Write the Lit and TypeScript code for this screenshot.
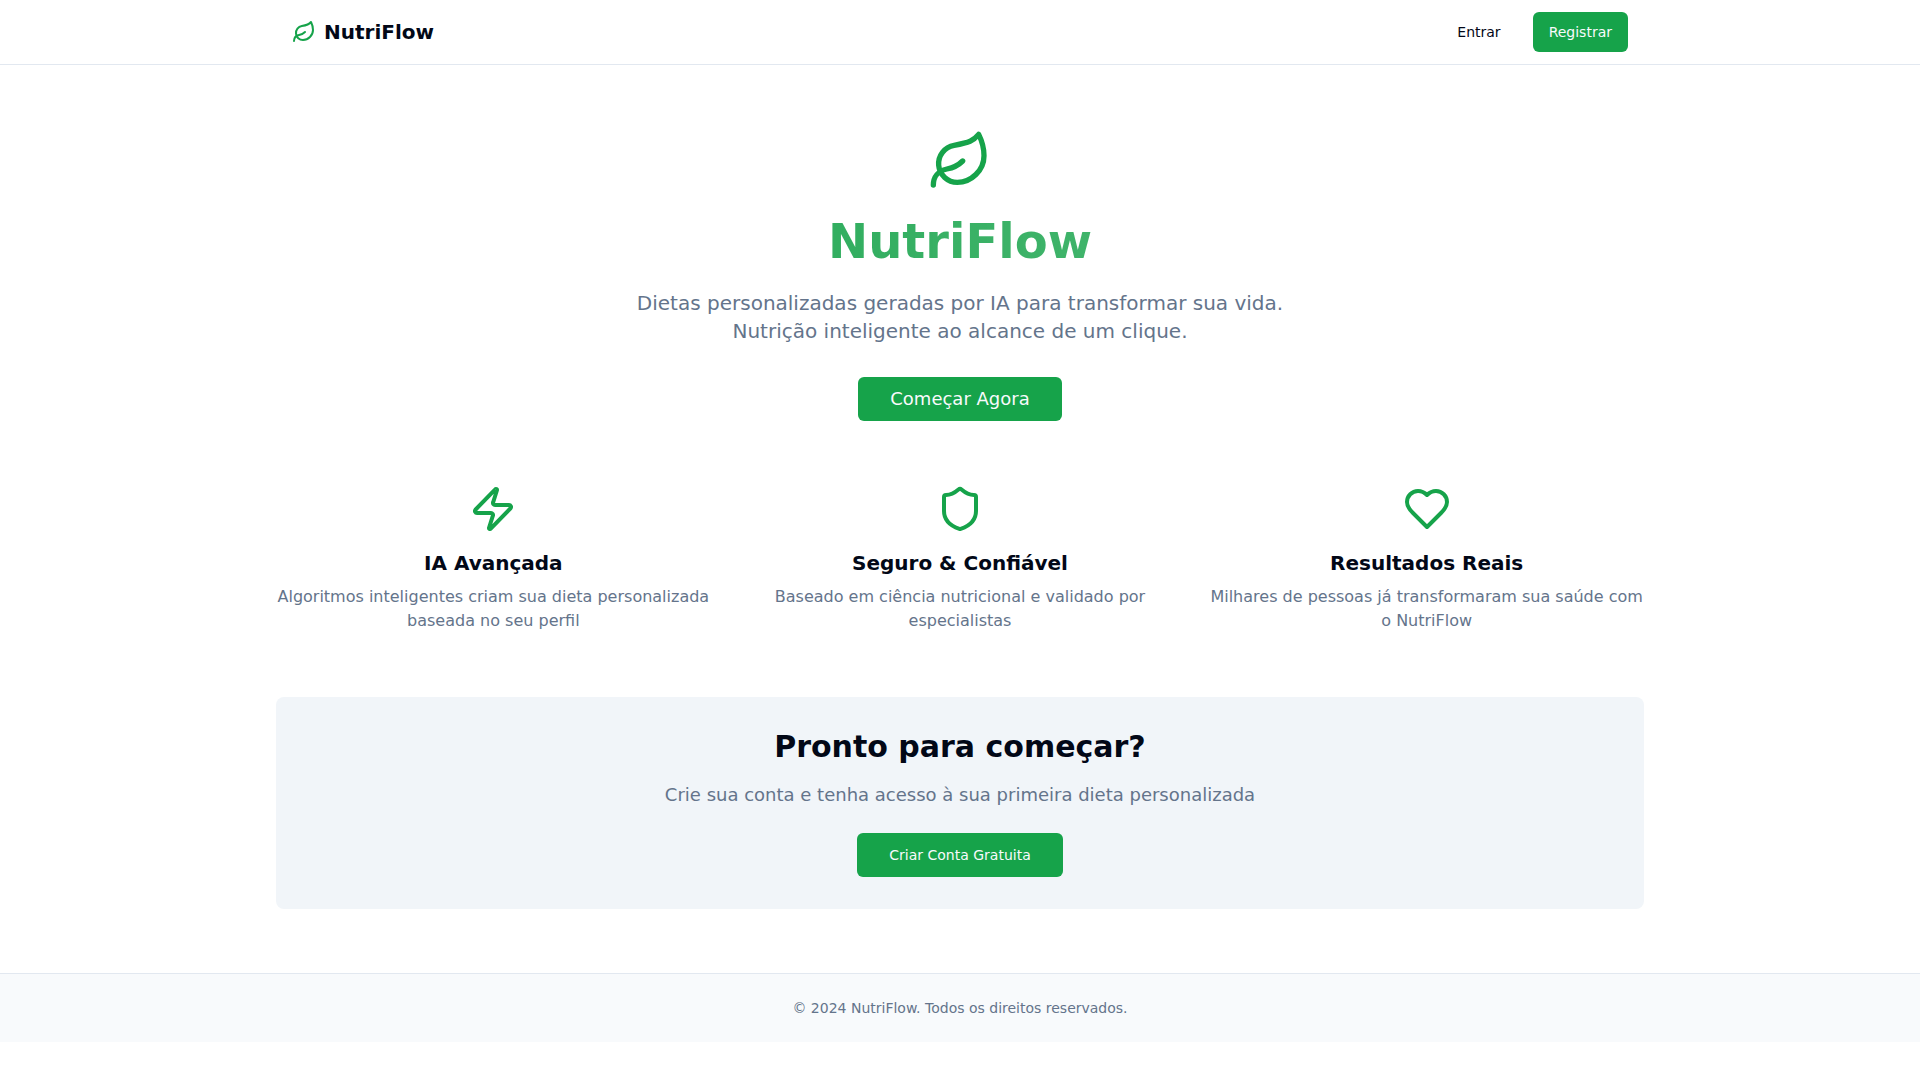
import { LitElement, html, css, svg } from "lit";
import { customElement, property } from "lit/decorators.js";

const iconPaths = {
  leaf: svg`<path d="M11 20A7 7 0 0 1 9.8 6.1C15.5 5 17 4.48 19 2c1 2 2 4.18 2 8 0 5.5-4.78 10-10 10Z"/><path d="M2 21c0-3 1.85-5.36 5.08-6C9.5 14.52 12 13 13 12"/>`,
  zap: svg`<path d="M4 14a1 1 0 0 1-.78-1.63l9.9-10.2a.5.5 0 0 1 .86.46l-1.92 6.02A1 1 0 0 0 13 10h7a1 1 0 0 1 .78 1.63l-9.9 10.2a.5.5 0 0 1-.86-.46l1.92-6.02A1 1 0 0 0 11 14z"/>`,
  shield: svg`<path d="M20 13c0 5-3.5 7.5-7.66 8.95a1 1 0 0 1-.67-.01C7.5 20.5 4 18 4 13V6a1 1 0 0 1 1-1c2 0 4.5-1.2 6.24-2.72a1.17 1.17 0 0 1 1.52 0C14.51 3.81 17 5 19 5a1 1 0 0 1 1 1z"/>`,
  heart: svg`<path d="M19 14c1.49-1.46 3-3.21 3-5.5A5.5 5.5 0 0 0 16.5 3c-1.76 0-3 .5-4.5 2-1.5-1.5-2.74-2-4.5-2A5.5 5.5 0 0 0 2 8.5c0 2.3 1.5 4.05 3 5.5l7 7Z"/>`,
};

type IconName = keyof typeof iconPaths;

@customElement("nf-icon")
export class NfIcon extends LitElement {
  @property() name: IconName = "leaf";

  static styles = css`
    :host {
      display: block;
      flex: none;
      width: 24px;
      height: 24px;
      color: #16a34a;
    }
    .glyph {
      display: block;
      width: 100%;
      height: 100%;
    }
  `;

  render() {
    return html`<svg class="glyph" viewBox="0 0 24 24" fill="none" stroke="currentColor"
      stroke-width="2" stroke-linecap="round" stroke-linejoin="round" aria-hidden="true">${iconPaths[this.name]}</svg>`;
  }
}

const features: { icon: IconName; title: string; text: string }[] = [
  {
    icon: "zap",
    title: "IA Avançada",
    text: "Algoritmos inteligentes criam sua dieta personalizada baseada no seu perfil",
  },
  {
    icon: "shield",
    title: "Seguro & Confiável",
    text: "Baseado em ciência nutricional e validado por especialistas",
  },
  {
    icon: "heart",
    title: "Resultados Reais",
    text: "Milhares de pessoas já transformaram sua saúde com o NutriFlow",
  },
];

@customElement("app-root")
export class AppRoot extends LitElement {
  static styles = css`
    :host {
      display: block;
      min-height: 100vh;
      background: #ffffff;
      color: #020817;
      font-family: "DejaVu Sans", sans-serif;
      font-size: 16px;
      line-height: 24px;
    }
    * {
      box-sizing: border-box;
    }
    h1, h2, h3, p {
      margin: 0;
    }
    .container {
      width: 100%;
      max-width: 1400px;
      margin: 0 auto;
      padding: 0 16px;
    }
    .header {
      border-bottom: 1px solid #e2e8f0;
    }
    .bar {
      display: flex;
      align-items: center;
      justify-content: space-between;
      min-height: 64px;
      padding: 0 16px;
    }
    .brand {
      display: flex;
      align-items: center;
      gap: 8px;
      color: inherit;
      text-decoration: none;
      font-size: 20px;
      line-height: 28px;
      font-weight: 700;
    }
    .actions {
      display: flex;
      align-items: center;
      gap: 16px;
    }
    .button {
      display: inline-flex;
      align-items: center;
      justify-content: center;
      height: 40px;
      padding: 0 16px;
      border: 0;
      border-radius: 6px;
      background: #16a34a;
      color: #f8fafc;
      font: inherit;
      font-size: 14px;
      line-height: 20px;
      white-space: nowrap;
      cursor: pointer;
    }
    .button:hover {
      background: #2dac5c;
    }
    .ghost {
      background: transparent;
      color: #020817;
    }
    .ghost:hover {
      background: #f1f5f9;
    }
    .large {
      height: 44px;
      padding: 0 32px;
    }
    .lead {
      font-size: 18px;
      line-height: 28px;
    }
    .main {
      display: flex;
      flex-direction: column;
      gap: 64px;
      padding-top: 64px;
      padding-bottom: 64px;
      text-align: center;
    }
    .hero {
      display: flex;
      flex-direction: column;
      align-items: center;
    }
    .hero-icon {
      width: 64px;
      height: 64px;
    }
    .title {
      width: 100%;
      margin: 24px 0;
      font-size: 48px;
      line-height: 48px;
      font-weight: 700;
      color: transparent;
      background: linear-gradient(to right, #16a34a, rgba(22, 163, 74, 0.7));
      background-clip: text;
      -webkit-background-clip: text;
    }
    .subtitle {
      max-width: 672px;
      margin-bottom: 32px;
      color: #64748b;
      font-size: 20px;
      line-height: 28px;
    }
    .features {
      display: grid;
      grid-template-columns: repeat(3, minmax(0, 1fr));
      gap: 32px;
    }
    .feature {
      display: flex;
      flex-direction: column;
      align-items: center;
    }
    .feature-icon {
      width: 48px;
      height: 48px;
      margin-bottom: 16px;
    }
    .feature-title {
      margin-bottom: 8px;
      font-size: 20px;
      line-height: 28px;
      font-weight: 600;
    }
    .muted {
      color: #64748b;
    }
    .cta {
      display: flex;
      flex-direction: column;
      align-items: center;
      padding: 32px;
      border-radius: 8px;
      background: #f1f5f9;
    }
    .cta-title {
      margin-bottom: 16px;
      font-size: 30px;
      line-height: 36px;
      font-weight: 700;
    }
    .cta-text {
      margin-bottom: 24px;
    }
    .footer {
      padding: 24px 0;
      border-top: 1px solid #e2e8f0;
      background: #f8fafc;
      color: #64748b;
      font-size: 14px;
      line-height: 20px;
      text-align: center;
    }
    @media (max-width: 767px) {
      .features {
        grid-template-columns: minmax(0, 1fr);
      }
    }
  `;

  render() {
    return html`
      <header class="header">
        <div class="container">
          <nav class="bar">
            <a class="brand" href="#"><nf-icon name="leaf"></nf-icon>NutriFlow</a>
            <div class="actions">
              <button class="button ghost" type="button">Entrar</button>
              <button class="button" type="button">Registrar</button>
            </div>
          </nav>
        </div>
      </header>
      <main class="container main">
        <section class="hero">
          <nf-icon class="hero-icon" name="leaf"></nf-icon>
          <h1 class="title">NutriFlow</h1>
          <p class="subtitle">Dietas personalizadas geradas por IA para transformar sua vida. Nutrição inteligente ao alcance de um clique.</p>
          <button class="button large lead" type="button">Começar Agora</button>
        </section>
        <section class="features">
          ${features.map(
            (f) => html`
              <article class="feature">
                <nf-icon class="feature-icon" name=${f.icon}></nf-icon>
                <h3 class="feature-title">${f.title}</h3>
                <p class="muted">${f.text}</p>
              </article>
            `
          )}
        </section>
        <section class="cta">
          <h2 class="cta-title">Pronto para começar?</h2>
          <p class="cta-text lead muted">Crie sua conta e tenha acesso à sua primeira dieta personalizada</p>
          <button class="button large" type="button">Criar Conta Gratuita</button>
        </section>
      </main>
      <footer class="footer">
        <div class="container">
          <p>© 2024 NutriFlow. Todos os direitos reservados.</p>
        </div>
      </footer>
    `;
  }
}
